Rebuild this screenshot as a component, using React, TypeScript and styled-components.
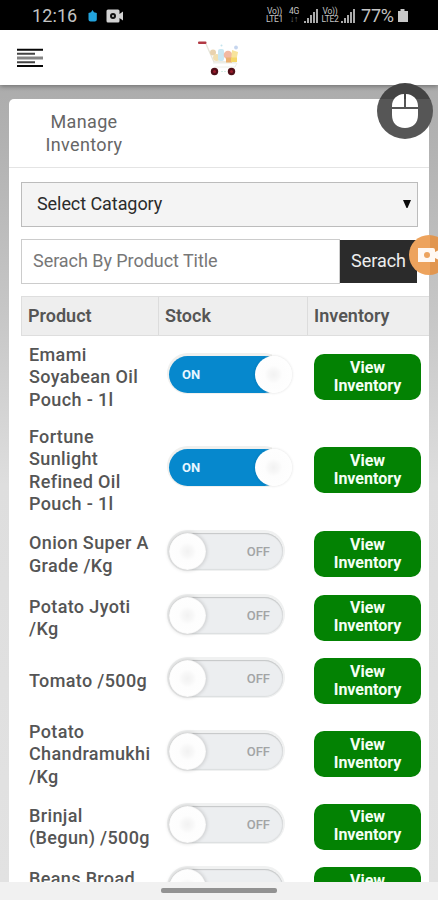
import React from "react";
import styled, { createGlobalStyle } from "styled-components";

const GlobalStyle = createGlobalStyle`
  * { box-sizing: border-box; }
  html, body { margin: 0; padding: 0; overflow: hidden; }
  body { font-family: Roboto, sans-serif; color: #555; }
  button, input { font-family: inherit; }
`;

const Screen = styled.div`
  position: relative;
  width: 438px;
  height: 900px;
  display: flex;
  flex-direction: column;
  overflow: hidden;
  background: #fff;
`;

const StatusBar = styled.div`
  height: 30px;
  flex: none;
  display: flex;
  align-items: center;
  background: #000;
  color: #c4c4c4;
  padding: 1px 29px 0 32px;
`;

const Clock = styled.span`
  width: 46px;
  font-size: 18px;
  letter-spacing: 0.1px;
  white-space: nowrap;
`;

const StatusLeft = styled.div`
  display: flex;
  align-items: center;
  flex: 1;
  svg { display: block; }
`;

const StatusRight = styled.div`
  display: flex;
  align-items: center;
`;

const Network = styled.div<{ $w: number; $dim?: boolean }>`
  width: ${(p) => p.$w}px;
  display: flex;
  flex-direction: column;
  align-items: center;
  font-size: 8.5px;
  line-height: 7.5px;
  font-weight: 400;
  letter-spacing: -0.3px;
  white-space: nowrap;
  span:last-child { opacity: ${(p) => (p.$dim ? 0.6 : 1)}; }
`;

const Percent = styled.span`
  width: 34px;
  margin: 0 2px 0 5px;
  font-size: 18px;
  letter-spacing: -0.2px;
  white-space: nowrap;
`;

const AppBar = styled.header`
  position: relative;
  z-index: 1;
  height: 55px;
  flex: none;
  display: flex;
  align-items: center;
  padding: 1px 17px 0;
  background: #fff;
  box-shadow: 0 1px 5px rgba(0, 0, 0, 0.4);
`;

const Logo = styled.svg`
  margin: 1px 0 0 154px;
`;

const Content = styled.main`
  flex: 1;
  min-height: 0;
  overflow: hidden;
  padding: 14px 9px 0;
  background: linear-gradient(#acacac 0, #b2b2b2 60px, #c8c8c8 240px, #dedede 400px, #e2e2e2 100%);
`;

const Card = styled.section`
  height: 900px;
  background: #fff;
  border-radius: 5px 5px 0 0;
`;

const CardHeader = styled.div`
  height: 69px;
  padding: 12px 0 0 25px;
  border-bottom: 1px solid #e4e4e4;
`;

const Title = styled.h1`
  margin: 0;
  width: 100px;
  text-align: center;
  font-size: 18px;
  line-height: 22.5px;
  font-weight: 400;
  letter-spacing: 0.35px;
  color: #666;
`;

const Form = styled.div`
  padding: 14px 0 0 12px;
`;

const Select = styled.div`
  width: 397px;
  height: 45px;
  display: flex;
  align-items: center;
  justify-content: space-between;
  padding: 0 6px 2px 15px;
  border: 1px solid #bcbcbc;
  background: #f4f4f4;
  font-size: 18px;
  letter-spacing: -0.07px;
  color: #2b2b2b;
`;

const SearchRow = styled.div`
  display: flex;
  margin-top: 12px;
  height: 45px;
`;

const SearchInput = styled.input`
  width: 319px;
  height: 45px;
  border: 1px solid #ccc;
  outline: none;
  padding: 0 11px 2px;
  font-size: 18px;
  letter-spacing: -0.05px;
  background: #fff;
  &::placeholder { color: #777; opacity: 1; }
`;

const SearchButton = styled.button`
  width: 77px;
  height: 43px;
  margin-top: 1px;
  padding: 0 0 2px;
  border: 0;
  background: #2b2b2b;
  color: #eee;
  font-size: 18px;
  letter-spacing: -0.05px;
`;

const columns = `
  display: grid;
  grid-template-columns: 136px 149px 123px;
`;

const TableHead = styled.div`
  ${columns}
  margin: 12px 0 0 12px;
  height: 40px;
  background: #eee;
  border: solid #dedede;
  border-width: 1px 0 1px 1px;
`;

const HeadCell = styled.div`
  padding: 0 0 2px 6px;
  display: flex;
  align-items: center;
  font-size: 18px;
  font-weight: 600;
  letter-spacing: 0;
  color: #555;
  & + & { border-left: 1px solid #dcdcdc; }
`;

const Row = styled.div<{ $h: number }>`
  ${columns}
  margin-left: 12px;
  height: ${(p) => p.$h}px;
  align-items: center;
`;

const Name = styled.div`
  padding: 1px 0 0 8px;
  font-size: 18px;
  line-height: 22.4px;
  font-weight: 500;
  letter-spacing: 0.36px;
  color: #555;
  white-space: pre;
`;

const Track = styled.div<{ $on: boolean }>`
  width: 114px;
  height: 37px;
  margin: 0 0 5px 12px;
  padding: 0 13px;
  display: flex;
  align-items: center;
  justify-content: ${(p) => (p.$on ? "flex-start" : "flex-end")};
  position: relative;
  border-radius: 19px;
  font-size: 13px;
  font-weight: ${(p) => (p.$on ? 700 : 500)};
  color: ${(p) => (p.$on ? "#e8f6ff" : "#a2a4a5")};
  background: ${(p) => (p.$on ? "#0688cd" : "#eceef0")};
  box-shadow: ${(p) =>
    p.$on
      ? "0 -1px 0 2px #f0f0ee"
      : "inset 0 1px 1px #c6c8c9, inset 0 0 1px 1px #dcdedf, 0 -1px 0 2px #f0f1f1"};
`;

const Knob = styled.span<{ $on: boolean }>`
  position: absolute;
  top: 0;
  left: ${(p) => (p.$on ? 86 : 0)}px;
  width: 37px;
  height: 37px;
  border-radius: 50%;
  background: radial-gradient(circle, #f2f2f2 0, #f7f7f7 5px, #fdfdfd 9px, #fff 100%);
  box-shadow: ${(p) =>
    p.$on ? "0 0 3px rgba(0,0,0,0.14)" : "inset 0 0 1px #bbb, 0 0 4px rgba(0,0,0,0.22)"};
`;

/* Covers the end of the track to the right of an active knob. */
const TrackEnd = styled.span`
  position: absolute;
  top: -3px;
  right: -3px;
  width: 14px;
  height: 43px;
  background: #fff;
`;

const ViewButton = styled.button`
  width: 107px;
  height: 46px;
  margin-left: 8px;
  padding: 0 0 1px;
  border: 0;
  border-radius: 10px;
  background: #038203;
  color: #f4fff4;
  font-size: 16px;
  line-height: 18px;
  font-weight: 700;
  letter-spacing: 0;
`;

const NavBar = styled.footer`
  height: 18px;
  flex: none;
  display: flex;
  justify-content: center;
  padding-top: 6px;
  background: #f1f1f1;
`;

const HomeHandle = styled.div`
  width: 116px;
  height: 5px;
  border-radius: 2px;
  background: #929292;
`;

const MouseBubble = styled.div`
  position: absolute;
  z-index: 2;
  left: 377px;
  top: 83px;
  width: 56px;
  height: 56px;
  border-radius: 50%;
  display: flex;
  align-items: center;
  justify-content: center;
  background: linear-gradient(#444 0 16px, #565656 16px);
`;

const RecordBubble = styled.div`
  position: absolute;
  z-index: 2;
  left: 409px;
  top: 235px;
  width: 40px;
  height: 40px;
  border-radius: 50%;
  display: flex;
  align-items: center;
  padding-left: 9px;
  background: linear-gradient(90deg, #eda35d 0 21px, #e19650 21px);
`;

const Signal = () => (
  <svg width="15" height="16" viewBox="0 0 15 16" fill="#aaa">
    <path d="M0 13h2v2H0zM3 10h2v5H3zM6 7h2v8H6zM9 4h2v11H9zM12 1h2v14h-2z" />
  </svg>
);

const CartLogo = () => (
  <Logo width="46" height="38" viewBox="0 0 46 38">
    <path d="M9 4 17 22h22" fill="none" stroke="#e6e5da" strokeWidth="1.3" />
    <path d="M16 23h24l-2 4H18" fill="none" stroke="#eceee8" />
    <rect x="1" y="1.500" width="8.500" height="2.600" rx="1" fill="#b23a44" />
    <circle cx="16" cy="12.500" r="3" fill="#e9d2ae" />
    <circle cx="19.500" cy="17.500" r="3.500" fill="#f2dfb0" />
    <rect x="21" y="9" width="6" height="12" rx="2" fill="#c9e7f2" />
    <circle cx="24.500" cy="5.500" r="1" fill="#c4e4ee" />
    <circle cx="31" cy="15" r="4.300" fill="#f2b9a2" />
    <path d="M35 10l6 2-2 10-5-1z" fill="#f8e49c" />
    <rect x="29" y="17.500" width="6" height="5" fill="#ebb070" />
    <rect x="34" y="17.500" width="6" height="4.500" fill="#f5d768" />
    <circle cx="39" cy="7.500" r="1.900" fill="#c5d5ee" />
    <path d="M24 31.500h5" stroke="#d4eee5" strokeDasharray="2 1" />
    <circle cx="17.500" cy="31.500" r="3.700" fill="#501019" />
    <circle cx="34.500" cy="31.500" r="3.700" fill="#501019" />
    <circle cx="17.500" cy="31.500" r="1.500" fill="#9b1c2c" />
    <circle cx="34.500" cy="31.500" r="1.500" fill="#9b1c2c" />
  </Logo>
);

const Toggle = ({ on }: { on: boolean }) => (
  <Track $on={on}>
    {on ? "ON" : "OFF"}
    {on && <TrackEnd />}
    <Knob $on={on} />
  </Track>
);

const products = [
  { name: "Emami\nSoyabean Oil\nPouch - 1l", on: true, h: 82 },
  { name: "Fortune\nSunlight\nRefined Oil\nPouch - 1l", on: true, h: 104 },
  { name: "Onion Super A\nGrade /Kg", on: false, h: 64 },
  { name: "Potato Jyoti\n/Kg", on: false, h: 63 },
  { name: "Tomato /500g", on: false, h: 64 },
  { name: "Potato\nChandramukhi\n/Kg", on: false, h: 82 },
  { name: "Brinjal\n(Begun) /500g", on: false, h: 63 },
  { name: "Beans Broad\n/500g", on: false, h: 64 },
];

export default function App() {
  return (
    <>
      <GlobalStyle />
      <Screen>
        <StatusBar>
          <StatusLeft>
            <Clock>12:16</Clock>
            <svg width="48" height="16" viewBox="0 0 48 16">
              <path d="M10.500 5 13 4.200 14.500 2 16 4.200 18.800 5v6.500a2 2 0 0 1-2 2h-4.300a2 2 0 0 1-2-2z" fill="#23a4dd" />
              <path d="M30 1.500h10a1.500 1.500 0 0 1 1.500 1.500v3L45 3.500v9L41.500 10v3a1.500 1.500 0 0 1-1.500 1.500H30a1.500 1.500 0 0 1-1.500-1.500V3A1.500 1.500 0 0 1 30 1.500z" fill="#d2d2d2" />
              <circle cx="35" cy="8" r="3" fill="#111" />
              <circle cx="35" cy="8" r="1" fill="#ccc" />
            </svg>
          </StatusLeft>
          <StatusRight>
            <Network $w={19}><span>Vo))</span><span>LTE1</span></Network>
            <Network $w={20} $dim><span>4G</span><span>↓↑</span></Network>
            <Signal />
            <Network $w={22}><span>Vo))</span><span>LTE2</span></Network>
            <Signal />
            <Percent>77%</Percent>
            <svg width="12" height="16" viewBox="0 0 12 16" fill="#c8c8c8">
              <path d="M3.500 1h4v2H11v11H1V3h2.500z" />
            </svg>
          </StatusRight>
        </StatusBar>
        <AppBar>
          <svg width="26" height="20" viewBox="0 0 26 20">
            <path d="M0 1.800h26M0 18h26" stroke="#080808" strokeWidth="2" />
            <path d="M0 5.800h18M0 14.300h18" stroke="#444" strokeWidth="2" />
            <path d="M0 10h26" stroke="#858585" strokeWidth="3" />
          </svg>
          <CartLogo />
        </AppBar>
        <Content>
          <Card>
            <CardHeader>
              <Title>Manage Inventory</Title>
            </CardHeader>
            <Form>
              <Select>
                Select Catagory
                <svg width="8" height="8" viewBox="0 0 8 8">
                  <path d="M0 0h8L4.500 8h-1z" fill="#0a0a0a" />
                </svg>
              </Select>
              <SearchRow>
                <SearchInput placeholder="Serach By Product Title" />
                <SearchButton>Serach</SearchButton>
              </SearchRow>
            </Form>
            <TableHead>
              <HeadCell>Product</HeadCell>
              <HeadCell>Stock</HeadCell>
              <HeadCell>Inventory</HeadCell>
            </TableHead>
            {products.map((p) => (
              <Row key={p.name} $h={p.h}>
                <Name>{p.name}</Name>
                <Toggle on={p.on} />
                <ViewButton>View<br />Inventory</ViewButton>
              </Row>
            ))}
          </Card>
        </Content>
        <NavBar>
          <HomeHandle />
        </NavBar>
        <MouseBubble>
          <svg width="26" height="36" viewBox="0 0 26 36" fill="#fff">
            <path d="M12 1v13H0v-1C0 6 5 1.500 12 1zM14 1v13h12v-1C26 6 21 1.500 14 1zM0 16h26v6c0 8-5 13-13 13S0 30 0 22z" />
          </svg>
        </MouseBubble>
        <RecordBubble>
          <svg width="26" height="16" viewBox="0 0 26 16">
            <path d="M0 1h15q2 0 2 2v2l6-3v12l-6-3v4H0z" fill="#fff8f2" />
            <circle cx="9" cy="8" r="3" fill="#eda35d" />
          </svg>
        </RecordBubble>
      </Screen>
    </>
  );
}
